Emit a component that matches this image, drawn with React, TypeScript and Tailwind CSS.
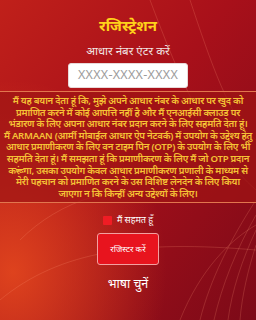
import { useState } from 'react'

function Backdrop() {
  return <svg aria-hidden="true" viewBox="0 0 256 320" className="absolute inset-0 h-full w-full" preserveAspectRatio="none">
    <defs>
      <linearGradient id="bg" x1="0" y1="0" x2="1" y2="1">
        <stop offset="0" stopColor="#c0201a" />
        <stop offset="0.45" stopColor="#a8101a" />
        <stop offset="1" stopColor="#7c0a18" />
      </linearGradient>
      <radialGradient id="glow" cx="0.05" cy="0.85" r="0.6">
        <stop offset="0" stopColor="#e4481e" stopOpacity="0.9" />
        <stop offset="1" stopColor="#e4481e" stopOpacity="0" />
      </radialGradient>
    </defs>
    <rect width="256" height="320" fill="url(#bg)" />
    <rect width="256" height="320" fill="url(#glow)" />
    <g fill="none" stroke="#ff9a7a" strokeOpacity="0.35" strokeWidth="0.6">
      <path d="M0 300 C60 250 140 240 256 250" />
      <path d="M20 240 C60 200 120 180 180 196" />
      <path d="M150 0 C180 80 210 150 256 190" />
      <path d="M190 0 C210 60 230 120 256 140" />
      <path d="M256 200 C230 240 210 280 200 320" />
      <path d="M256 215 C236 250 222 285 214 320" />
      <path d="M256 230 C242 260 232 290 228 320" />
      <path d="M256 245 C248 270 242 295 240 320" />
      <path d="M180 320 C200 270 230 240 256 225" />
    </g>
  </svg>
}

const consent = [
  'मैं यह बयान देता हूं कि, मुझे अपने आधार नंबर के आधार पर खुद को',
  'प्रमाणित करने में कोई आपत्ति नहीं है और मैं एनआईसी क्लाउड पर',
  'भंडारण के लिए अपना आधार नंबर प्रदान करने के लिए सहमति देता हूं।',
  'मैं ARMAAN (आर्मी मोबाईल आधार ऐप नेटवर्क) में उपयोग के उद्देश्य हेतु',
  'आधार प्रमाणीकरण के लिए वन टाइम पिन (OTP) के उपयोग के लिए भी',
  'सहमति देता हूं। मैं समझता हूं कि प्रमाणीकरण के लिए मैं जो OTP प्रदान',
  'करूंगा, उसका उपयोग केवल आधार प्रमाणीकरण प्रणाली के माध्यम से',
  'मेरी पहचान को प्रमाणित करने के उस विशिष्ट लेनदेन के लिए किया',
  'जाएगा न कि किन्हीं अन्य उद्देश्यों के लिए।',
]

export default function App() {
  const [agreed, setAgreed] = useState(true)
  return <div className="relative h-[320px] w-[256px] overflow-hidden" style={{ fontFamily: '"Noto Sans", "Liberation Sans", sans-serif' }}>
    <Backdrop />
    <div className="relative flex flex-col items-center">
      <h1 className="mt-[15px] text-[15px] font-bold leading-[20px] text-[#ffd21a]">रजिस्ट्रेशन</h1>
      <p className="mt-[8px] text-[11.5px] leading-[16px] text-[#f1e6e4]">आधार नंबर एंटर करें</p>
      <div className="mt-[4px] flex h-[25px] w-[120px] items-center justify-center rounded-[3px] border border-[#e8d8d8] bg-white">
        <span className="text-[12.5px] tracking-[0.3px] text-[#9c9c9c]">XXXX-XXXX-XXXX</span>
      </div>
      <div className="mt-[3px] flex w-full flex-col items-center border-y border-[#e2764e] bg-[#9e1414]/70 py-[3px] text-[#f5c236]">
        {consent.map((line) => <p key={line} className="h-[11.6px] whitespace-nowrap text-[9.6px] font-semibold leading-[11.6px] tracking-[-0.25px]">{line}</p>)}
      </div>
      <label className="mt-[11px] flex h-[12px] items-center gap-[5px]">
        <button type="button" onClick={() => setAgreed((v) => !v)} className={`h-[9px] w-[9px] rounded-[1px] ${agreed ? 'bg-[#f01c24]' : 'bg-white'}`} />
        <span className="text-[9px] leading-[12px] text-white">मैं सहमत हूँ</span>
      </label>
      <button type="button" className="mt-[7px] flex h-[32px] w-[62px] items-center justify-center rounded-[3px] border border-[#f3a0a0] bg-[#e8141e] text-[8.5px] text-white">रजिस्टर करें</button>
      <p className="mt-[10px] text-[12.5px] leading-[18px] text-white">भाषा चुनें</p>
    </div>
  </div>
}
